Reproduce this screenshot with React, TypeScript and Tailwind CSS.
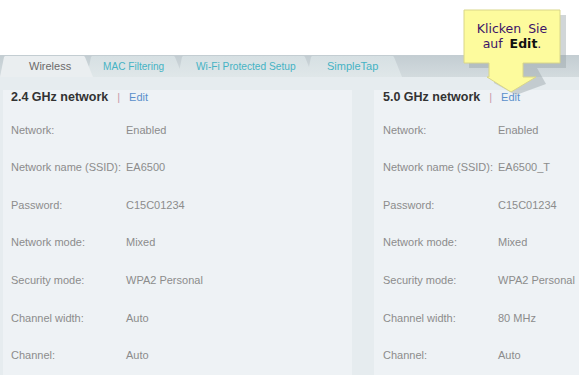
import React from 'react'

const rows24 = [
  ['Network:', 'Enabled'],
  ['Network name (SSID):', 'EA6500'],
  ['Password:', 'C15C01234'],
  ['Network mode:', 'Mixed'],
  ['Security mode:', 'WPA2 Personal'],
  ['Channel width:', 'Auto'],
  ['Channel:', 'Auto'],
]

const rows50 = [
  ['Network:', 'Enabled'],
  ['Network name (SSID):', 'EA6500_T'],
  ['Password:', 'C15C01234'],
  ['Network mode:', 'Mixed'],
  ['Security mode:', 'WPA2 Personal'],
  ['Channel width:', '80 MHz'],
  ['Channel:', 'Auto'],
]

function Panel({ title, rows, className }: { title: string; rows: string[][]; className: string }) {
  return (
    <div className={`bg-[#eef2f5] ${className}`}>
      {/* header */}
      <div className="flex items-center h-[16px] mt-[-1px]">
        <span className="font-bold text-[#333] text-[12.5px]">{title}</span>
        <span className="ml-[9px] text-[#c99aa8] text-[11px]">|</span>
        <span className="ml-[9px] text-[#5b8fcb] text-[11px]">Edit</span>
      </div>
      <div className="mt-[6px]">
        {rows.map(([label, value]) => (
          <div key={label} className="flex items-center h-[37.6px] text-[11px] text-[#8c8c8c]">
            <span className="w-[115px] shrink-0">{label}</span>
            <span>{value}</span>
          </div>
        ))}
      </div>
    </div>
  )
}

const tabs = [
  { label: 'Wireless', active: true, cls: 'w-[93px] ml-0 pl-[29px] text-[11px]' },
  { label: 'MAC Filtering', active: false, cls: 'w-[96px] ml-[-6px] pl-[16px] text-[10.1px]' },
  { label: 'Wi-Fi Protected Setup', active: false, cls: 'w-[135px] ml-[-5px] pl-[18px] text-[10.2px]' },
  { label: 'SimpleTap', active: false, cls: 'w-[95px] ml-[-6px] pl-[20px] text-[11px]' },
]

export default function App() {
  return (
    <div className="relative w-[579px] h-[375px] overflow-hidden bg-white font-['Liberation_Sans',Arial,sans-serif]">
      <div className="h-[55px]" />
      {/* tab bar */}
      <div className="h-[22px] bg-gradient-to-b from-[#c3cdd2] to-[#d3dbde] flex items-end">
        {tabs.map((t) => (
          <div
            key={t.label}
            className={`${t.cls} h-[21px] flex items-center [clip-path:polygon(0_100%,4px_1px,5px_0,calc(100%-9px)_0,calc(100%-8px)_1px,100%_100%)] ${
              t.active
                ? 'bg-[#eaeef0] text-[#6a6a6a] relative z-10'
                : 'bg-gradient-to-b from-[#d6e0e3] to-[#e0e7e9] text-[#46b3c4]'
            }`}
          >
            {t.label}
          </div>
        ))}
      </div>
      {/* content */}
      <div className="bg-[#e6ecef] h-[298px] pt-[13px] flex">
        <Panel title="2.4 GHz network" rows={rows24} className="ml-[3px] w-[349px] pl-[8px]" />
        <Panel title="5.0 GHz network" rows={rows50} className="ml-[22px] flex-1 pl-[9px]" />
      </div>

      {/* callout */}
      <div className="absolute left-[463px] top-[9px] w-[110px] h-[88px]">
        <svg width="110" height="88" className="absolute left-0 top-0">
          <path d="M6 6 H103 V59 H74 L83 75 L53 86 L31 74 H31 V59 H6 Z" fill="#9aa3a8" opacity="0.45" />
          <path d="M1 1 H97 V54 H60 V68 H73 L48 83 L24 68 H26 V54 H1 Z" fill="#fdfb9d" stroke="#d9d68a" strokeWidth="1" />
        </svg>
        <div className="absolute left-[1px] top-[12px] w-[96px] text-center text-[12.5px] leading-[15px] text-[#3c1468] font-['DejaVu_Sans',Verdana,sans-serif] [word-spacing:3px]">
          Klicken Sie
          <br />
          auf <b className="text-[#111]">Edit</b>.
        </div>
      </div>
    </div>
  )
}
